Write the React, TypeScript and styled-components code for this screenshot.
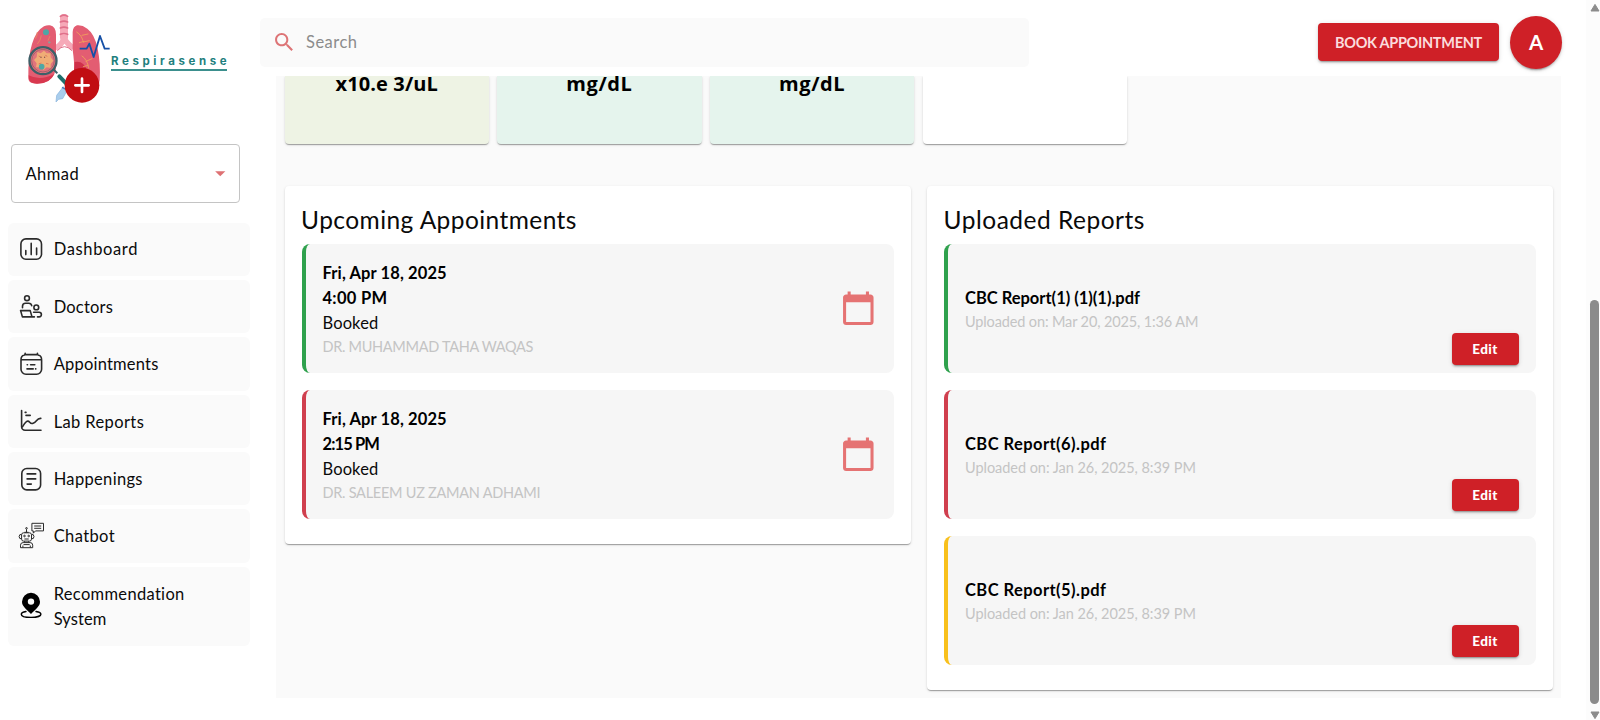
import React from "react";
import styled, { createGlobalStyle, css } from "styled-components";

const GlobalStyle = createGlobalStyle`
  *, *::before, *::after { box-sizing: border-box; }
  html, body { margin: 0; padding: 0; height: 100%; overflow: hidden; background: #fff; }
  body { font-family: Lato, "Liberation Sans", sans-serif; color: #0a0a0a; }
  button { font-family: inherit; border: 0; margin: 0; cursor: pointer; }
`;

const tracked = css<{ $track?: number }>`
  letter-spacing: ${(p) => p.$track ?? 0}px;
`;

/* ---------- page frame ---------- */
const Page = styled.div`
  display: grid;
  grid-template-columns: 259.5px 1fr 14px;
  height: 720px;
  overflow: hidden;
`;

const Sidebar = styled.aside`
  display: flex;
  flex-direction: column;
  padding-top: 10px;
`;

const Main = styled.main`
  display: flex;
  flex-direction: column;
  min-width: 0;
`;

/* ---------- sidebar ---------- */
const Brand = styled.div`
  display: flex;
  align-items: flex-start;
  height: 134px;
  padding-left: 20px;
`;

const BrandName = styled.div`
  margin: 42px 0 0 -2.4px;
  width: 116.5px;
  height: 18.5px;
  border-bottom: 2px solid #3b8f8d;
  font: 700 11.5px/18px Inter, sans-serif;
  letter-spacing: 3.6px;
  color: #1f7f7e;
  white-space: nowrap;
`;

const PatientSelect = styled.div`
  display: flex;
  align-items: center;
  justify-content: space-between;
  width: 229.5px;
  height: 59px;
  margin-left: 10.8px;
  padding: 0 7px 0 13.7px;
  border: 1px solid #c4c4c4;
  border-radius: 4px;
  font-size: 16.5px;
  ${tracked}
`;

const Nav = styled.nav`
  display: flex;
  flex-direction: column;
  gap: 4px;
  margin: 19.5px 0 0 8px;
  width: 241.5px;
`;

const NavItem = styled.a<{ $tall?: boolean }>`
  display: flex;
  align-items: center;
  gap: 11px;
  height: ${(p) => (p.$tall ? 78.7 : 53.4)}px;
  padding-left: 10.7px;
  border-radius: 6px;
  background: #fafafa;
`;

const NavLabel = styled.span`
  width: 150px;
  padding-top: 1.4px;
  font-size: 16.5px;
  line-height: 25px;
`;

const NavLine = styled.span`
  display: block;
  ${tracked}
`;

const NavIcon = styled.svg`
  width: 24px;
  height: 24px;
  flex: none;
  overflow: visible;
  fill: none;
  stroke: #2b2b2b;
  stroke-width: 1.6;
  stroke-linecap: round;
  stroke-linejoin: round;
`;

/* ---------- header ---------- */
const Header = styled.header`
  display: flex;
  align-items: center;
  flex: none;
  height: 76px;
  padding: 9px 24px 0 0;
`;

const SearchBox = styled.div`
  display: flex;
  align-items: center;
  gap: 10px;
  width: 769px;
  height: 49px;
  padding: 0 0 1px 12px;
  border-radius: 5px;
  background: #fafafa;
  font-size: 16.5px;
  color: #8c8c8c;
  ${tracked}
`;

const HeaderActions = styled.div`
  display: flex;
  align-items: center;
  gap: 11px;
  margin-left: auto;
`;

const raised = css`
  background: #cf2027;
  box-shadow: 0 3px 1px -2px rgba(0, 0, 0, 0.2), 0 2px 2px rgba(0, 0, 0, 0.14),
    0 1px 5px rgba(0, 0, 0, 0.12);
`;

const BookButton = styled.button`
  ${raised}
  width: 181px;
  height: 37.5px;
  margin-top: -1px;
  padding: 0;
  border-radius: 4px;
  font-size: 14.5px;
  font-weight: 700;
  color: #fbdcdd;
  white-space: nowrap;
  ${tracked}
`;

const Avatar = styled.div`
  ${raised}
  display: grid;
  place-items: center;
  width: 52px;
  height: 53px;
  padding-bottom: 1.5px;
  border-radius: 50%;
  font-size: 20.5px;
  font-weight: 700;
  color: #fff;
`;

/* ---------- content ---------- */
const Content = styled.section`
  width: 1285.5px;
  height: 622px;
  margin-left: 16px;
  padding: 0 9px;
  background: #fafafa;
  overflow: hidden;
`;

const cardShadow = css`
  box-shadow: 0 2px 1px -1px rgba(0, 0, 0, 0.2), 0 1px 1px rgba(0, 0, 0, 0.14),
    0 1px 3px rgba(0, 0, 0, 0.12);
`;

const StatRow = styled.div`
  display: flex;
  gap: 8.2px;
  height: 67.6px;
`;

const StatCard = styled.div<{ $bg: string }>`
  ${cardShadow}
  width: 204.5px;
  border-radius: 0 0 4px 4px;
  background: ${(p) => p.$bg};
  text-align: center;
`;

const StatUnit = styled.div`
  font: 700 20px/15px "Open Sans", "Noto Sans", sans-serif;
  color: #000;
  ${tracked}
`;

const Columns = styled.div`
  display: grid;
  grid-template-columns: 626px 625.5px;
  column-gap: 16.5px;
  align-items: start;
  margin-top: 42.4px;
`;

const Card = styled.article`
  ${cardShadow}
  padding: 17px 17px 25.5px;
  border-radius: 4px;
  background: #fff;
`;

const CardTitle = styled.h2`
  margin: 0 0 8px;
  font-size: 24.5px;
  font-weight: 400;
  line-height: 33px;
  white-space: nowrap;
  text-indent: -0.4px;
  ${tracked}
`;

const EntryList = styled.div`
  display: flex;
  flex-direction: column;
  gap: 17.4px;
`;

const Entry = styled.div<{ $accent: string }>`
  display: flex;
  align-items: center;
  height: 128.6px;
  padding: 0 17px;
  border-left: 4.1px solid ${(p) => p.$accent};
  border-radius: 8px;
  background: #f6f6f6;
`;

const EntryText = styled.div`
  flex: 1;
  padding-top: 2px;
`;

const Strong = styled.div`
  font-size: 16.5px;
  font-weight: 700;
  line-height: 25px;
  color: #000;
  ${tracked}
`;

const Status = styled.div`
  font-size: 16.5px;
  line-height: 25px;
  ${tracked}
`;

const Muted = styled.div`
  font-size: 14.5px;
  line-height: 21.5px;
  color: #c4c4c4;
  ${tracked}
`;

const EditButton = styled.button`
  ${raised}
  align-self: flex-end;
  width: 67px;
  height: 32px;
  margin-bottom: 8px;
  padding: 0;
  border-radius: 4px;
  font-size: 13.5px;
  font-weight: 900;
  color: #fff;
  ${tracked}
`;

/* ---------- scrollbar ---------- */
const ScrollTrack = styled.div`
  display: flex;
  flex-direction: column;
  align-items: center;
  justify-content: space-between;
  height: 720px;
  padding: 3px 0 0.5px 3px;
  background: #fcfcfc;
`;

const ScrollThumb = styled.div`
  width: 8.4px;
  height: 404px;
  margin-top: auto;
  margin-bottom: 6.5px;
  border-radius: 5px;
  background: #8b8b8b;
`;

const ScrollArrow = () => (
  <svg width="10" height="9" viewBox="0 0 10 9">
    <path d="M5 1.4 L9 8 H1 Z" fill="#8b8b8b" stroke="#8b8b8b" strokeWidth="1" strokeLinejoin="round" />
  </svg>
);

const ScrollArrowDown = () => (
  <svg width="10" height="9" viewBox="0 0 10 9">
    <path d="M5 7.6 L9 1 H1 Z" fill="#8b8b8b" stroke="#8b8b8b" strokeWidth="1" strokeLinejoin="round" />
  </svg>
);

/* ---------- drawings ---------- */
const Logo = () => (
  <svg width="93.33" height="96.67" viewBox="60 30 280 290" fill="none">
    <path d="M192 54V112" stroke="#f6a9b8" strokeWidth="24" strokeLinecap="round" />
    <path d="M181 49q11-7 22 0M181 66q11-5 22 0M181 84q11-5 22 0M181 103q11-5 22 0" stroke="#e0708a" strokeWidth="5" strokeLinecap="round" />
    <path d="M192 112Q192 126 172 142M192 112Q196 126 214 140" stroke="#f6a9b8" strokeWidth="17" strokeLinecap="round" />
    <path d="M172 152Q193 128 216 152" stroke="#e0708a" strokeWidth="3" />
    <path d="M150 76Q168 80 168 104V190Q170 226 146 242Q124 255 96 249Q85 246 85 234Q84 170 96 132Q108 92 132 79Q142 74 150 76Z" fill="#e35d72" />
    <path d="M86 226Q120 244 163 222Q150 250 112 251Q84 252 86 226Z" fill="#d8384f" />
    <path d="M231 76Q246 74 262 86Q284 102 293 146Q302 190 299 240Q297 262 276 256L222 214Q224 190 218 150V96Q219 80 231 76Z" fill="#e35d72" />
    <path d="M224 186Q250 180 262 212L240 224L222 214Z" fill="#cf3049" />
    <path d="M230 96Q246 106 250 126M246 106L264 102M250 126L268 122M238 128L252 124M246 168Q262 178 266 204M258 184L276 176M264 196L250 200" stroke="#f0a05a" strokeWidth="2.600" strokeLinecap="round" />
    <circle cx="138" cy="97" r="9" fill="#4fa7a5" />
    <circle cx="148" cy="127" r="3.500" fill="#8a9f9a" />
    <path d="M112 96Q112 108 106 116M124 106Q122 122 112 132M150 108L144 122" stroke="#e98a62" strokeWidth="2.500" />
    <circle cx="129" cy="182" r="40.500" fill="#e2747c" stroke="#3d6068" strokeWidth="7" />
    <circle cx="129" cy="182" r="34" stroke="#a8606c" strokeWidth="3" />
    <path d="M112 156l10 4 10-8 8 8 12 0 0 12 8 10-8 10 0 12-12-2-10 8-8-8-14 0 2-12-8-10 8-8z" fill="#f0ad76" />
    <path d="M116 168l6 3M136 166l6 3M116 192l8-3M138 190l8 2" stroke="#e0785a" strokeWidth="3" />
    <path d="M123 170v4M134 170v4" stroke="#7a4a4a" strokeWidth="3" />
    <circle cx="125" cy="200" r="8.500" fill="#4fa7a5" />
    <path d="M160 208L172 220" stroke="#3d6068" strokeWidth="6" />
    <path d="M178 229L204 256" stroke="#1f6f6c" strokeWidth="12" strokeLinecap="round" />
    <path d="M190 260L200 274L188 296L176 298L168 306L170 286Z" fill="#a9cdec" stroke="#86b2dc" strokeWidth="2" />
    <path d="M186 262L198 268" stroke="#4c79b8" strokeWidth="4" />
    <path d="M239 146H260L268 131L281 171L300 108L314 146H329" stroke="#1650a6" strokeWidth="5.500" strokeLinejoin="round" />
    <circle cx="246" cy="256" r="52" fill="#c10d12" />
    <path d="M246 236V276M226 256H266" stroke="#fff" strokeWidth="8" strokeLinecap="round" />
  </svg>
);

const DashboardIcon = () => (
  <NavIcon viewBox="0 0 24 24">
    <rect x="1.9" y="1.9" width="20.6" height="20.3" rx="5" />
    <path d="M6.8 13.6v4M12.2 6.4v11.2M17.6 11v6.6" />
  </NavIcon>
);

const DoctorsIcon = () => (
  <NavIcon viewBox="0 0 24 24">
    <circle cx="8" cy="3.2" r="2.4" />
    <path d="M3.5 12.7v-1.4a3 3 0 0 1 3-3h3.2a3 3 0 0 1 3 2.4" />
    <circle cx="17.3" cy="12.4" r="2.4" />
    <path d="M1.6 15.6h9.6l1.8 6.3H3.4zM13 21.9h2.4M14.6 17.3h5.5a2.3 2.3 0 0 1 0 4.6h-1.6" />
  </NavIcon>
);

const AppointmentsIcon = () => (
  <NavIcon viewBox="0 0 24 24">
    <path d="M2 7.8h20.6M6.2 1.2Q6.2 3 5 3.2Q2 3.6 2 8v9.2a5 5 0 0 0 5 5h10.6a5 5 0 0 0 5-5V8q0-4.4-3-4.8Q18.4 3 18.4 1.2M6.2 2.6h12.2" />
    <path d="M8.2 12.8h.3M11.6 12.8h4.2M8 16.9h6.2M16.6 16.9h.2" />
  </NavIcon>
);

const LabReportsIcon = () => (
  <NavIcon viewBox="0 0 24 24">
    <path d="M2.6 1.5v16.2a3.5 3.5 0 0 0 3.5 3.5H22" />
    <path d="M3.4 17.8C6.5 12.6 8.6 10.8 10.7 13.3S15.6 14 17.4 11.7Q19.4 9.2 21.8 9.4" />
    <path d="M6.2 3.4h.8M7 6.4h4.2" />
  </NavIcon>
);

const HappeningsIcon = () => (
  <NavIcon viewBox="0 0 24 24">
    <rect x="2.8" y="1.5" width="18.8" height="21.4" rx="5" />
    <path d="M8.1 6.9h8.6M8.1 11.9h8.6M8.1 17.1h4.2" />
  </NavIcon>
);

const ChatbotIcon = () => (
  <NavIcon viewBox="0 0 24 24">
    <g strokeWidth="1" strokeLinecap="butt">
      <path d="M12.900-.7h11.600v7.600h-8l-2.200 2.300V6.900h-1.400z" />
      <path d="M15.200 2h7M15.200 4.300h7" />
      <circle cx="7.500" cy="4.300" r=".8" />
      <path d="M7.500 5.200v3.200M5.500 8.300h4" />
      <rect x="2.600" y="8.800" width="9.900" height="8.300" rx="2" />
      <path d="M2.400 10.600H.9l-.8 2 .8 2h1.500M12.700 10.600h1.500l.8 2-.8 2h-1.500M5.400 15h4.300M5.500 17.300v1M9.600 17.300v1" />
      <circle cx="5.500" cy="12" r=".8" />
      <circle cx="9.700" cy="12" r=".8" />
      <path d="M1.500 23.700v-2.500q0-2.600 2.600-2.600h7q2.600 0 2.600 2.600v2.500zM3.900 23.500v-2M11.300 23.500v-2M4.500 20.600h6.200" />
    </g>
  </NavIcon>
);

const LocationIcon = () => (
  <NavIcon viewBox="0 0 24 24">
    <path d="M7 17.5C4 18 2.3 19 2.3 20.2c0 1.9 4.3 3.2 9.7 3.2s9.900-1.300 9.900-3.200c0-1.200-1.800-2.200-4.900-2.700" stroke="#000" strokeWidth="1.4" />
    <path
      d="M12-1.2a9 9 0 0 0-9 9c0 4.6 4.4 7.4 9 12.2 4.6-4.8 9-7.6 9-12.2a9 9 0 0 0-9-9zm0 5.600a3.200 3.200 0 1 1 0 6.400 3.200 3.200 0 0 1 0-6.400z"
      fill="#000"
      fillRule="evenodd"
      stroke="none"
    />
  </NavIcon>
);

const SearchIcon = () => (
  <svg width="24.5" height="24.5" viewBox="0 0 24 24" fill="#dd7476">
    <path d="M15.5 14h-.79l-.28-.27C15.41 12.59 16 11.11 16 9.5 16 5.91 13.09 3 9.5 3S3 5.91 3 9.5 5.91 16 9.5 16c1.61 0 3.09-.59 4.23-1.57l.27.28v.79l5 4.99L20.49 19l-4.99-5zm-6 0C7.01 14 5 11.99 5 9.5S7.01 5 9.5 5 14 7.01 14 9.5 11.99 14 9.5 14z" />
  </svg>
);

const DropDownIcon = () => (
  <svg width="24.5" height="24.5" viewBox="0 0 24 24" fill="#de7173">
    <path d="M7 10l5 5 5-5z" />
  </svg>
);

const CalendarIcon = () => (
  <svg width="36.6" height="36.6" viewBox="0 0 24 24" fill="#e57373">
    <path d="M20 3h-1V1h-2v2H7V1H5v2H4c-1.1 0-2 .9-2 2v16c0 1.1.9 2 2 2h16c1.1 0 2-.9 2-2V5c0-1.1-.9-2-2-2zm0 18H4V8h16v13z" />
  </svg>
);

/* ---------- data ---------- */
const navItems = [
  { icon: DashboardIcon, lines: [["Dashboard", 0.64]] },
  { icon: DoctorsIcon, lines: [["Doctors", 0.19]] },
  { icon: AppointmentsIcon, lines: [["Appointments", 0.2]] },
  { icon: LabReportsIcon, lines: [["Lab Reports", 0.38]] },
  { icon: HappeningsIcon, lines: [["Happenings", 0.33]] },
  { icon: ChatbotIcon, lines: [["Chatbot", 0.39]] },
  { icon: LocationIcon, lines: [["Recommendation", 0.32], ["System", 0.08]] },
] as { icon: React.FC; lines: [string, number][] }[];

const stats = [
  { unit: "x10.e 3/uL", bg: "#eef3e4", track: 0.11 },
  { unit: "mg/dL", bg: "#e5f4ed", track: 0.6 },
  { unit: "mg/dL", bg: "#e5f4ed", track: 0.6 },
  { unit: "", bg: "#ffffff", track: 0 },
];

const green = "#2fa14d";
const red = "#d03f4e";
const yellow = "#f8c01c";

const appointments = [
  { accent: green, date: "Fri, Apr 18, 2025", time: "4:00 PM", timeTrack: 0.3, doctor: "DR. MUHAMMAD TAHA WAQAS", track: -0.3 },
  { accent: red, date: "Fri, Apr 18, 2025", time: "2:15 PM", timeTrack: -0.9, doctor: "DR. SALEEM UZ ZAMAN ADHAMI", track: -0.26 },
];

const reports = [
  { accent: green, name: "CBC Report(1) (1)(1).pdf", nameTrack: -0.01, on: "Mar 20, 2025, 1:36 AM", track: -0.13 },
  { accent: red, name: "CBC Report(6).pdf", nameTrack: 0.44, on: "Jan 26, 2025, 8:39 PM", track: -0.04 },
  { accent: yellow, name: "CBC Report(5).pdf", nameTrack: 0.44, on: "Jan 26, 2025, 8:39 PM", track: -0.04 },
];

export default function App() {
  return (
    <>
      <GlobalStyle />
      <Page>
        <Sidebar>
          <Brand>
            <Logo />
            <BrandName>Respirasense</BrandName>
          </Brand>
          <PatientSelect $track={0.47}>
            Ahmad
            <DropDownIcon />
          </PatientSelect>
          <Nav>
            {navItems.map(({ icon: Icon, lines }) => (
              <NavItem key={lines[0][0]} $tall={lines.length > 1}>
                <Icon />
                <NavLabel>
                  {lines.map(([text, track]) => (
                    <NavLine key={text} $track={track}>
                      {text}
                    </NavLine>
                  ))}
                </NavLabel>
              </NavItem>
            ))}
          </Nav>
        </Sidebar>

        <Main>
          <Header>
            <SearchBox $track={0.5}>
              <SearchIcon />
              Search
            </SearchBox>
            <HeaderActions>
              <BookButton $track={-0.3}>BOOK APPOINTMENT</BookButton>
              <Avatar>A</Avatar>
            </HeaderActions>
          </Header>

          <Content>
            <StatRow>
              {stats.map((s, i) => (
                <StatCard key={i} $bg={s.bg}>
                  <StatUnit $track={s.track}>{s.unit}</StatUnit>
                </StatCard>
              ))}
            </StatRow>

            <Columns>
              <Card>
                <CardTitle $track={0.43}>Upcoming Appointments</CardTitle>
                <EntryList>
                  {appointments.map((a) => (
                    <Entry key={a.time} $accent={a.accent}>
                      <EntryText>
                        <Strong $track={0.12}>{a.date}</Strong>
                        <Strong $track={a.timeTrack}>{a.time}</Strong>
                        <Status $track={0.12}>Booked</Status>
                        <Muted $track={a.track}>{a.doctor}</Muted>
                      </EntryText>
                      <CalendarIcon />
                    </Entry>
                  ))}
                </EntryList>
              </Card>

              <Card>
                <CardTitle $track={0.5}>Uploaded Reports</CardTitle>
                <EntryList>
                  {reports.map((r) => (
                    <Entry key={r.name} $accent={r.accent}>
                      <EntryText>
                        <Strong $track={r.nameTrack}>{r.name}</Strong>
                        <Muted $track={r.track}>Uploaded on: {r.on}</Muted>
                      </EntryText>
                      <EditButton $track={0.42}>Edit</EditButton>
                    </Entry>
                  ))}
                </EntryList>
              </Card>
            </Columns>
          </Content>
        </Main>

        <ScrollTrack>
          <ScrollArrow />
          <ScrollThumb />
          <ScrollArrowDown />
        </ScrollTrack>
      </Page>
    </>
  );
}
